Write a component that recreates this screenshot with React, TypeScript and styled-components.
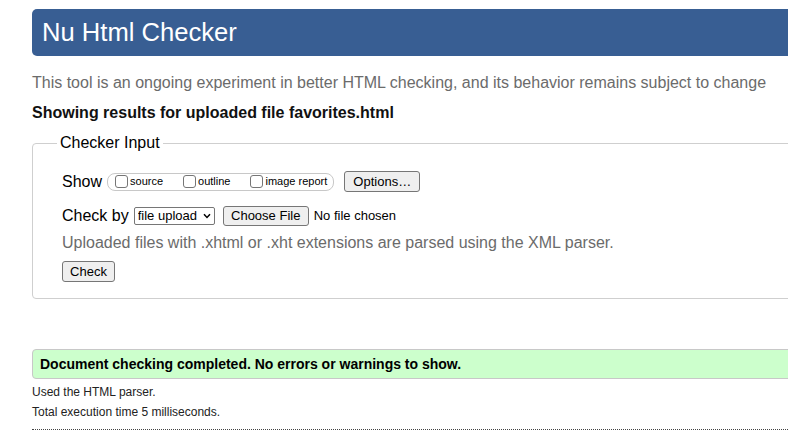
import React from "react";
import styled, { createGlobalStyle } from "styled-components";

const Global = createGlobalStyle`
  html, body { margin: 0; padding: 0; background: #fff; overflow: hidden; }
  body { font-family: "Liberation Sans", Arial, sans-serif; color: #000; }
`;

const Page = styled.div`
  width: 1100px;
  padding: 9px 0 0 32px;
  display: flex;
  flex-direction: column;
`;

const Header = styled.h1`
  margin: 0;
  height: 47px;
  line-height: 47px;
  padding-left: 10px;
  border-radius: 5px;
  background: #385e93;
  color: #fff;
  font-size: 25.6px;
  font-weight: normal;
`;

const Intro = styled.p`
  margin: 18px 0 0;
  font-size: 16px;
  line-height: 18px;
  color: #6b6b6b;
`;

const Subject = styled.h2`
  margin: 12px 0 0;
  font-size: 16px;
  line-height: 18px;
  font-weight: bold;
  color: #111;
`;

const Fieldset = styled.fieldset`
  margin: 12px 0 0;
  padding: 19px 0 16px 24px;
  border: 1px solid #cfcfcf;
  border-radius: 4px;
  min-width: 0;
`;

const Legend = styled.legend`
  padding: 0 3px;
  font-size: 16px;
  line-height: 18px;
`;

const Inner = styled.div`
  padding-left: 5px;
  display: flex;
  flex-direction: column;
`;

const Row = styled.div<{ $top?: number }>`
  display: flex;
  align-items: center;
  height: 21px;
  margin-top: ${(p) => p.$top ?? 0}px;
`;

const Label = styled.span`
  font-size: 16px;
  line-height: 18px;
`;

const Pill = styled.div`
  display: flex;
  align-items: center;
  height: 18px;
  box-sizing: border-box;
  margin-left: 5px;
  padding: 0 6px 0 7px;
  border: 1px solid #c8c8c8;
  border-radius: 8px;
  gap: 20px;
`;

const Opt = styled.label`
  display: flex;
  align-items: center;
  font-size: 11px;
  line-height: 13px;
`;

const Box = styled.input`
  appearance: none;
  margin: 0 2px 0 0;
  width: 13px;
  height: 13px;
  box-sizing: border-box;
  border: 1px solid #767676;
  border-radius: 3px;
  background: #fff;
`;

const Button = styled.button<{ $w: number; $h: number; $ml?: number }>`
  width: ${(p) => p.$w}px;
  height: ${(p) => p.$h}px;
  margin-left: ${(p) => p.$ml ?? 0}px;
  padding: 0;
  box-sizing: border-box;
  border: 1px solid #767676;
  border-radius: 3px;
  background: #efefef;
  color: #000;
  font-family: "Liberation Sans", Arial, sans-serif;
  font-size: 13px;
`;

const SelectWrap = styled.div`
  position: relative;
  margin-left: 5px;
  display: flex;
`;

const Select = styled.select`
  appearance: none;
  width: 81px;
  height: 18px;
  box-sizing: border-box;
  padding: 0 0 0 3px;
  border: 1px solid #767676;
  border-radius: 2px;
  background: #fff;
  color: #000;
  font-family: "Liberation Sans", Arial, sans-serif;
  font-size: 13px;
`;

const Chevron = styled.svg`
  position: absolute;
  right: 4px;
  top: 6px;
  width: 8px;
  height: 6px;
  pointer-events: none;
`;

const FileText = styled.span`
  margin-left: 5px;
  font-size: 13px;
`;

const Help = styled.p`
  margin: 8px 0 0;
  font-size: 16px;
  line-height: 18px;
  color: #6b6b6b;
`;

const Success = styled.div`
  margin-top: 50px;
  height: 30px;
  box-sizing: border-box;
  padding-left: 7px;
  display: flex;
  align-items: center;
  background: #ccffcc;
  border: 1px solid #c8c8c8;
  border-radius: 4px;
  font-size: 14px;
  font-weight: bold;
`;

const Note = styled.p<{ $top: number }>`
  margin: ${(p) => p.$top}px 0 0;
  font-size: 12px;
  line-height: 14px;
  color: #222;
`;

const Rule = styled.hr`
  margin: 10px 0 0;
  border: 0;
  border-top: 1px dotted #444;
  height: 0;
`;

export default function App() {
  return (
    <>
      <Global />
      <Page>
        <Header>Nu Html Checker</Header>
        <Intro>
          This tool is an ongoing experiment in better HTML checking, and its behavior remains
          subject to change
        </Intro>
        <Subject>Showing results for uploaded file favorites.html</Subject>
        <Fieldset>
          <Legend>Checker Input</Legend>
          <Inner>
            <Row>
              <Label>Show</Label>
              <Pill>
                <Opt>
                  <Box type="checkbox" />
                  source
                </Opt>
                <Opt>
                  <Box type="checkbox" />
                  outline
                </Opt>
                <Opt>
                  <Box type="checkbox" />
                  image report
                </Opt>
              </Pill>
              <Button $w={76} $h={21} $ml={10}>
                Options…
              </Button>
            </Row>
            <Row $top={13}>
              <Label>Check by</Label>
              <SelectWrap>
                <Select defaultValue="file">
                  <option value="file">file upload</option>
                  <option value="address">address</option>
                  <option value="text">text input</option>
                </Select>
                <Chevron viewBox="0 0 8 6">
                  <path d="M1 1.2 L4 4.4 L7 1.2" fill="none" stroke="#000" strokeWidth="1.5" />
                </Chevron>
              </SelectWrap>
              <Button $w={86} $h={20} $ml={8}>
                Choose File
              </Button>
              <FileText>No file chosen</FileText>
            </Row>
            <Help>Uploaded files with .xhtml or .xht extensions are parsed using the XML parser.</Help>
            <Row $top={9}>
              <Button $w={53} $h={21}>
                Check
              </Button>
            </Row>
          </Inner>
        </Fieldset>
        <Success>Document checking completed. No errors or warnings to show.</Success>
        <Note $top={6}>Used the HTML parser.</Note>
        <Note $top={6}>Total execution time 5 milliseconds.</Note>
        <Rule />
      </Page>
    </>
  );
}
